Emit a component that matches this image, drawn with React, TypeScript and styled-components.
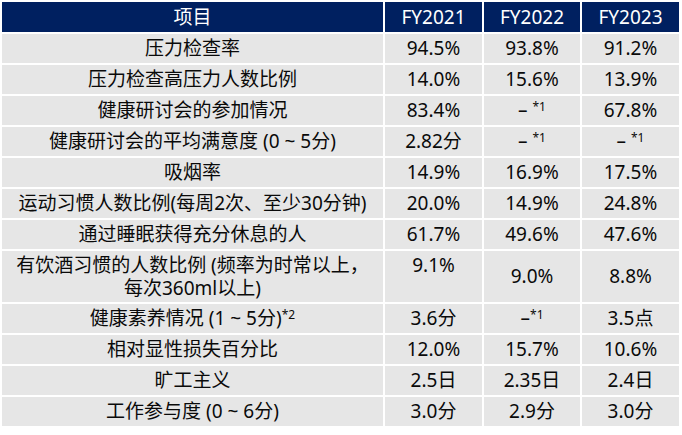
import React from "react";
import styled, { createGlobalStyle } from "styled-components";

const Global = createGlobalStyle`
  html, body { margin: 0; padding: 0; background: #ffffff; }
  body { padding: 2px 0 0 2px; font-family: "Noto Sans", "Noto Sans CJK SC", sans-serif; }
`;

const Table = styled.div`
  display: grid;
  grid-template-columns: 381px 97px 96px 97px;
  grid-auto-rows: auto;
  gap: 2px;
  width: 677px;
  background: #ffffff;
`;

const HeadCell = styled.div`
  height: 30px;
  background: #002060;
  color: #ffffff;
  font-size: 19px;
  display: flex;
  align-items: center;
  justify-content: center;
  line-height: 1;
`;

const Cell = styled.div<{ $tall?: boolean; $top?: boolean }>`
  background: #e6e6e6;
  color: #0a0a0a;
  font-size: 19px;
  line-height: 23px;
  height: ${(p) => (p.$tall ? "51px" : "29px")};
  display: flex;
  align-items: ${(p) => (p.$top ? "flex-start" : "center")};
  padding-top: ${(p) => (p.$top ? "3px" : "0")};
  box-sizing: border-box;
  justify-content: center;
  text-align: center;
  white-space: nowrap;
`;

const Sup = styled.span`
  font-size: 12px;
  position: relative;
  top: -6px;
  line-height: 0;
`;

type Row = { label: React.ReactNode; v: React.ReactNode[]; tall?: boolean; top?: number[] };

const dashNote = (space: boolean) => (
  <span>
    –{space ? " " : ""}
    <Sup>*1</Sup>
  </span>
);

const rows: Row[] = [
  { label: "压力检查率", v: ["94.5%", "93.8%", "91.2%"] },
  { label: "压力检查高压力人数比例", v: ["14.0%", "15.6%", "13.9%"] },
  { label: "健康研讨会的参加情况", v: ["83.4%", dashNote(true), "67.8%"] },
  { label: "健康研讨会的平均满意度 (0 ~ 5分)", v: ["2.82分", dashNote(true), dashNote(true)] },
  { label: "吸烟率", v: ["14.9%", "16.9%", "17.5%"] },
  { label: "运动习惯人数比例(每周2次、至少30分钟)", v: ["20.0%", "14.9%", "24.8%"] },
  { label: "通过睡眠获得充分休息的人", v: ["61.7%", "49.6%", "47.6%"] },
  {
    label: (
      <span>
        有饮酒习惯的人数比例 (频率为时常以上，
        <br />
        每次360ml以上)
      </span>
    ),
    v: ["9.1%", "9.0%", "8.8%"],
    tall: true,
    top: [0],
  },
  {
    label: (
      <span>
        健康素养情况 (1 ~ 5分)<Sup>*2</Sup>
      </span>
    ),
    v: ["3.6分", dashNote(false), "3.5点"],
  },
  { label: "相对显性损失百分比", v: ["12.0%", "15.7%", "10.6%"] },
  { label: "旷工主义", v: ["2.5日", "2.35日", "2.4日"] },
  { label: "工作参与度 (0 ~ 6分)", v: ["3.0分", "2.9分", "3.0分"] },
];

export default function App() {
  return (
    <>
      <Global />
      <Table>
        <HeadCell>项目</HeadCell>
        <HeadCell>FY2021</HeadCell>
        <HeadCell>FY2022</HeadCell>
        <HeadCell>FY2023</HeadCell>
        {rows.map((r, i) => (
          <React.Fragment key={i}>
            <Cell $tall={r.tall}>{r.label}</Cell>
            {r.v.map((val, j) => (
              <Cell key={j} $tall={r.tall} $top={r.top?.includes(j)}>
                {val}
              </Cell>
            ))}
          </React.Fragment>
        ))}
      </Table>
    </>
  );
}
